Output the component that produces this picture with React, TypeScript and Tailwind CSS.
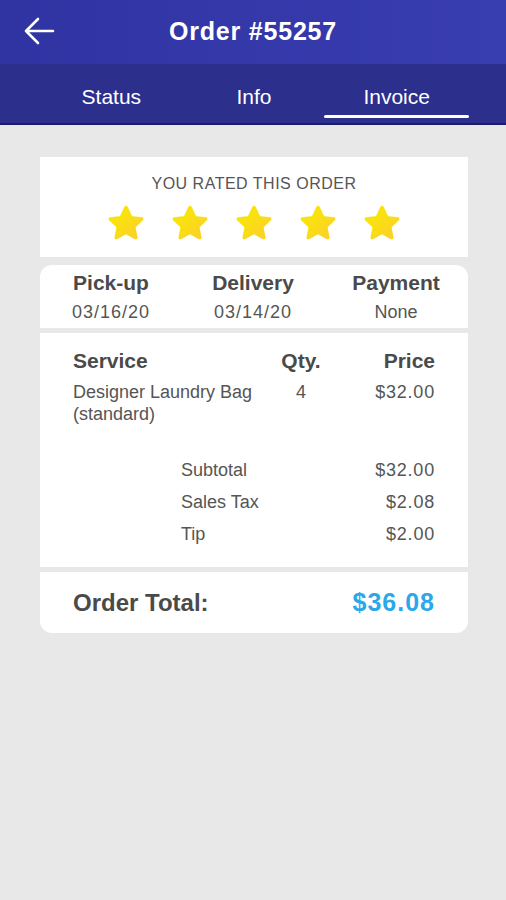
import React from "react";

const font = { fontFamily: '"Liberation Sans", Arial, sans-serif' };

function Star() {
  return (
    <svg width="40" height="38" viewBox="0 0 24 23">
      <defs>
        <linearGradient id="sg" x1="0" y1="0" x2="1" y2="1">
          <stop offset="0" stopColor="#f8ea00" />
          <stop offset="1" stopColor="#fccf2c" />
        </linearGradient>
      </defs>
      <path
        d="M12 2.2l2.9 6.1 6.6.8-4.9 4.6 1.3 6.6L12 17l-5.9 3.3 1.3-6.6-4.9-4.6 6.6-.8z"
        fill="url(#sg)"
        stroke="url(#sg)"
        strokeWidth="2.2"
        strokeLinejoin="round"
      />
    </svg>
  );
}

export default function App() {
  return (
    <div className="min-h-[900px] w-[506px] bg-[#e8e8e8]" style={font}>
      {/* Header */}
      <div className="h-16 bg-gradient-to-r from-[#3033a2] to-[#383db0] flex items-center relative">
        <svg
          className="absolute left-[23px] top-[16px]"
          width="32"
          height="30"
          viewBox="0 0 32 30"
          fill="none"
          stroke="white"
          strokeWidth="2.6"
          strokeLinecap="round"
          strokeLinejoin="round"
        >
          <path d="M30 15H3M15 3L3 15l12 12" />
        </svg>
        <h1 className="w-full text-center text-white text-[25px] font-bold tracking-[0.8px]">
          Order #55257
        </h1>
      </div>

      {/* Tabs */}
      <div className="h-[61px] bg-[#2d2f8d] border-b-2 border-[#1c1d6a] flex">
        <div className="w-[40px]" />
        <div className="flex-1 flex items-center justify-center text-white text-[21px] pt-[6px]">Status</div>
        <div className="flex-1 flex items-center justify-center text-white text-[21px] pt-[6px]">Info</div>
        <div className="flex-1 flex items-center justify-center text-white text-[21px] pt-[6px] relative">
          <span>Invoice</span>
          <div className="absolute bottom-[5px] left-[-1px] right-[-1px] h-[3px] bg-white rounded-full" />
        </div>
        <div className="w-[38px]" />
      </div>

      <div className="pl-10 pr-[38px] pt-[32px]">
        {/* Rating */}
        <div className="bg-white h-[100px] flex flex-col items-center pt-[15px]">
          <div className="text-[16px] text-[#555] tracking-[0.5px]">YOU RATED THIS ORDER</div>
          <div className="flex gap-[24px] mt-[8px]">
            <Star />
            <Star />
            <Star />
            <Star />
            <Star />
          </div>
        </div>

        {/* Dates */}
        <div className="bg-white rounded-t-[12px] mt-[8px] h-[63px] flex pt-[2px]">
          <div className="w-[142px] flex flex-col items-center">
            <div className="text-[21px] font-bold text-[#4a4a4a]">Pick-up</div>
            <div className="text-[18px] text-[#555] tracking-[1px]">03/16/20</div>
          </div>
          <div className="w-[142px] flex flex-col items-center">
            <div className="text-[21px] font-bold text-[#4a4a4a]">Delivery</div>
            <div className="text-[18px] text-[#555] tracking-[1px]">03/14/20</div>
          </div>
          <div className="w-[144px] flex flex-col items-center">
            <div className="text-[21px] font-bold text-[#4a4a4a]">Payment</div>
            <div className="text-[18px] text-[#555]">None</div>
          </div>
        </div>

        {/* Items */}
        <div className="bg-white mt-[5px] h-[234px] px-[33px] pt-[12px]">
          <div className="flex items-baseline text-[21px] font-bold text-[#4a4a4a]">
            <div className="flex-1">Service</div>
            <div className="w-[40px] text-center">Qty.</div>
            <div className="w-[114px] text-right">Price</div>
          </div>
          <div className="flex text-[18px] text-[#555] mt-[4px] leading-[22px]">
            <div className="flex-1 whitespace-nowrap">
              Designer Laundry Bag
              <br />
              (standard)
            </div>
            <div className="w-[40px] text-center">4</div>
            <div className="w-[114px] text-right tracking-[0.8px]">$32.00</div>
          </div>
          <div className="ml-[108px] mt-[34px] flex flex-col gap-[10px] text-[18px] text-[#555] leading-[22px]">
            <div className="flex justify-between">
              <span>Subtotal</span>
              <span className="tracking-[0.8px]">$32.00</span>
            </div>
            <div className="flex justify-between">
              <span>Sales Tax</span>
              <span className="tracking-[0.8px]">$2.08</span>
            </div>
            <div className="flex justify-between">
              <span>Tip</span>
              <span className="tracking-[0.8px]">$2.00</span>
            </div>
          </div>
        </div>

        {/* Total */}
        <div className="bg-white rounded-b-[12px] mt-[5px] h-[61px] px-[33px] flex items-center justify-between">
          <span className="text-[24px] font-bold text-[#4a4a4a]">Order Total:</span>
          <span className="text-[25px] font-bold text-[#2ba7ea] tracking-[1px]">$36.08</span>
        </div>
      </div>
    </div>
  );
}
